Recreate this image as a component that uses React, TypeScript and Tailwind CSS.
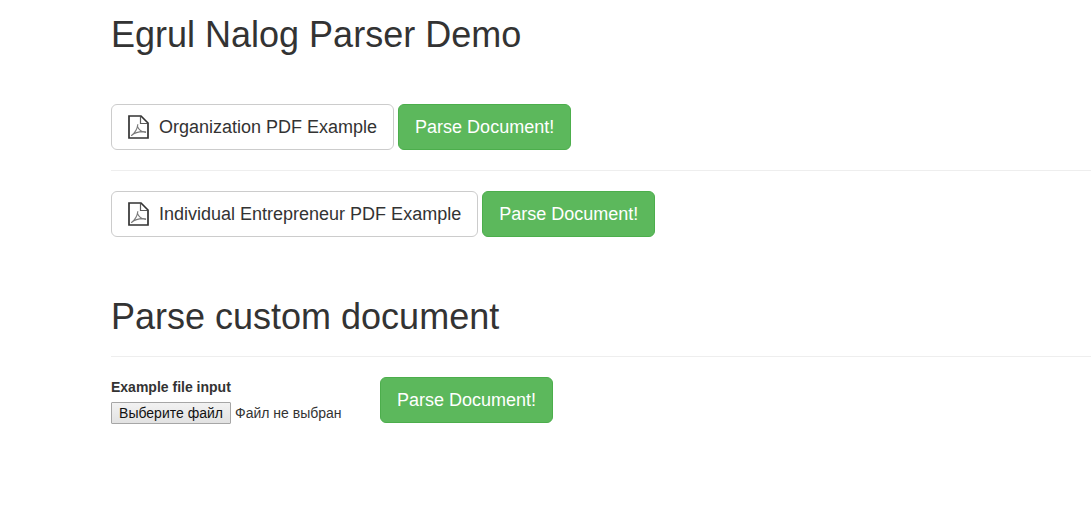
function PdfIcon() {
  return (
    <svg width="21" height="24" viewBox="0 0 21 24" fill="none" className="text-[#333]">
      <path d="M1 1H13L20 8V23H1Z" stroke="currentColor" strokeWidth="1.7" strokeLinejoin="miter" />
      <path d="M12.5 1.5V8.5H19.5" stroke="currentColor" strokeOpacity="0.8" strokeWidth="1.2" />
      <path
        d="M3.5 20.5C6 18.6 9.2 14 9.8 9.6M9.4 11.2C10.4 14.4 13.6 17 17.6 17.4M3.5 20.5C6.6 17.8 11.4 16.2 17.6 16.8"
        stroke="currentColor"
        strokeOpacity="0.65"
        strokeWidth="1.1"
        strokeLinecap="round"
      />
    </svg>
  );
}

function ParseButton() {
  return (
    <button className="h-[46px] rounded-md border border-[#4cae4c] bg-[#5cb85c] px-4 text-[18px] text-white">
      Parse Document!
    </button>
  );
}

function ExampleRow({ title }: { title: string }) {
  return (
    <div className="flex gap-1">
      <a className="flex h-[46px] items-center gap-[10px] rounded-md border border-[#ccc] bg-white px-4 text-[18px] text-[#333]">
        <PdfIcon />
        {title}
      </a>
      <ParseButton />
    </div>
  );
}

export default function App() {
  return (
    <div className="min-h-[513px] bg-white pl-[111px] pt-[15px] font-['Liberation_Sans',Arial,sans-serif] text-[#333]">
      <h1 className="text-[36px] leading-[40px]">Egrul Nalog Parser Demo</h1>

      <div className="mt-[49px]">
        <ExampleRow title="Organization PDF Example" />
      </div>
      <hr className="mb-5 mt-5 border-[#eee]" />
      <ExampleRow title="Individual Entrepreneur PDF Example" />

      <h2 className="mt-[60px] text-[36px] leading-[40px]">Parse custom document</h2>
      <hr className="mt-[19px] border-[#eee]" />

      <div className="mt-5 flex items-start">
        <div className="w-[269px]">
          <label className="block text-[14px] font-bold leading-[20px]">Example file input</label>
          <div className="mt-[5px] flex items-center gap-1 text-[14px] leading-[16px]">
            <button className="h-[22px] w-[120px] rounded-[1px] border border-[#a6a6a6] bg-linear-to-b from-[#f2f2f2] to-[#e2e2e2] text-center text-[14px] text-[#111]">
              Выберите файл
            </button>
            <span>Файл не выбран</span>
          </div>
        </div>
        <ParseButton />
      </div>
    </div>
  );
}
